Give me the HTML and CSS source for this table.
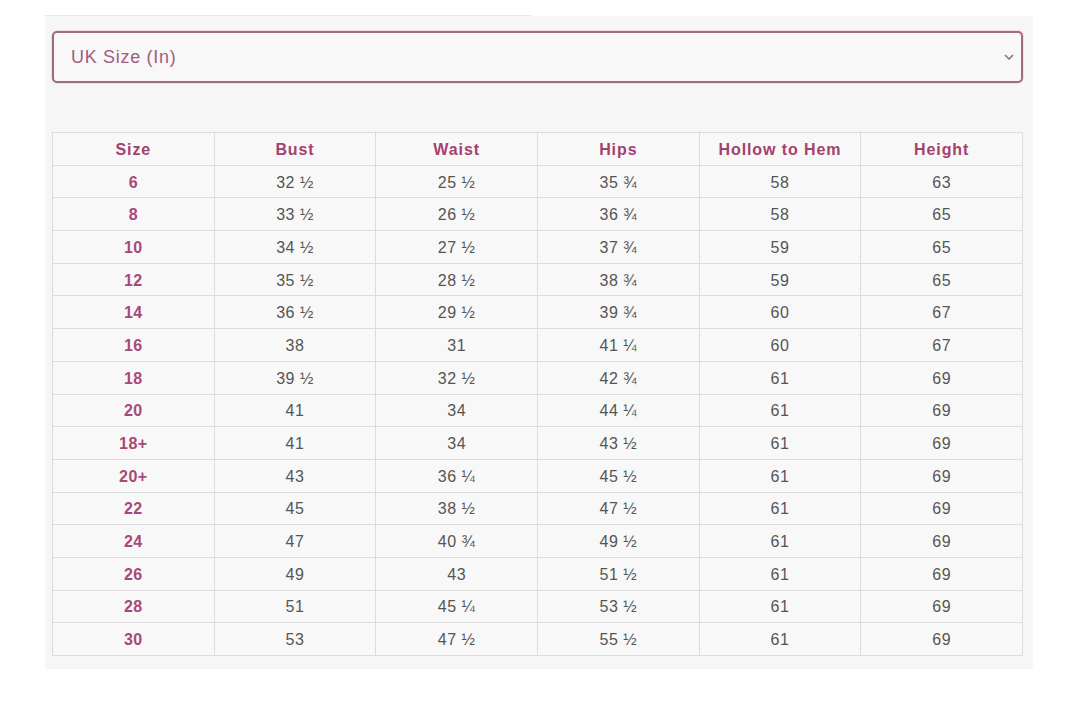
FILE: index.html
```html
<!DOCTYPE html>
<html>
<head>
<meta charset="utf-8">
<link rel="stylesheet" href="styles.css">
</head>
<body>
<div class="panel">
  <div class="topline"></div>
  <div class="select">
    <span class="select-label">UK Size (In)</span>
    <svg class="chev" width="10" height="6" viewBox="0 0 10 6"><path d="M1 1 L5 5 L9 1" fill="none" stroke="#9a6a82" stroke-width="1.6"/></svg>
  </div>
  <table class="sizes">
    <thead>
      <tr><th>Size</th><th>Bust</th><th>Waist</th><th>Hips</th><th>Hollow to Hem</th><th>Height</th></tr>
    </thead>
    <tbody>
      <tr><td class="sz">6</td><td>32 ½</td><td>25 ½</td><td>35 ¾</td><td>58</td><td>63</td></tr>
      <tr><td class="sz">8</td><td>33 ½</td><td>26 ½</td><td>36 ¾</td><td>58</td><td>65</td></tr>
      <tr><td class="sz">10</td><td>34 ½</td><td>27 ½</td><td>37 ¾</td><td>59</td><td>65</td></tr>
      <tr><td class="sz">12</td><td>35 ½</td><td>28 ½</td><td>38 ¾</td><td>59</td><td>65</td></tr>
      <tr><td class="sz">14</td><td>36 ½</td><td>29 ½</td><td>39 ¾</td><td>60</td><td>67</td></tr>
      <tr><td class="sz">16</td><td>38</td><td>31</td><td>41 ¼</td><td>60</td><td>67</td></tr>
      <tr><td class="sz">18</td><td>39 ½</td><td>32 ½</td><td>42 ¾</td><td>61</td><td>69</td></tr>
      <tr><td class="sz">20</td><td>41</td><td>34</td><td>44 ¼</td><td>61</td><td>69</td></tr>
      <tr><td class="sz">18+</td><td>41</td><td>34</td><td>43 ½</td><td>61</td><td>69</td></tr>
      <tr><td class="sz">20+</td><td>43</td><td>36 ¼</td><td>45 ½</td><td>61</td><td>69</td></tr>
      <tr><td class="sz">22</td><td>45</td><td>38 ½</td><td>47 ½</td><td>61</td><td>69</td></tr>
      <tr><td class="sz">24</td><td>47</td><td>40 ¾</td><td>49 ½</td><td>61</td><td>69</td></tr>
      <tr><td class="sz">26</td><td>49</td><td>43</td><td>51 ½</td><td>61</td><td>69</td></tr>
      <tr><td class="sz">28</td><td>51</td><td>45 ¼</td><td>53 ½</td><td>61</td><td>69</td></tr>
      <tr><td class="sz">30</td><td>53</td><td>47 ½</td><td>55 ½</td><td>61</td><td>69</td></tr>
    </tbody>
  </table>
</div>
</body>
</html>
```

FILE: styles.css
```css
html, body {
  margin: 0;
  padding: 0;
  background: #ffffff;
  font-family: "Liberation Sans", Arial, sans-serif;
}

.panel {
  position: relative;
  margin: 16px 0 0 45px;
  width: 988px;
  box-sizing: border-box;
  padding: 15px 10px 13px 7px;
  background: #f6f6f6;
}

.topline {
  position: absolute;
  left: 0;
  top: -1px;
  width: 486px;
  height: 1px;
  background: #e6e6e6;
}

.select {
  display: flex;
  align-items: center;
  justify-content: space-between;
  box-sizing: border-box;
  width: 971px;
  height: 52px;
  padding: 0 7px 0 17px;
  border: 2px solid #9d6b83;
  border-radius: 5px;
  background: #f8f8f8;
  box-shadow: 0 0 0 1px #f6dbe7;
}

.select-label {
  font-size: 18px;
  color: #a25c82;
  letter-spacing: 0.7px;
}

.chev {
  display: block;
}

.sizes {
  margin-top: 49px;
  width: 971px;
  border-collapse: collapse;
  table-layout: fixed;
  background: #f8f8f8;
}

.sizes th,
.sizes td {
  border: 1px solid #dcdcdc;
  height: 29.7px;
  padding: 2px 0 0;
  text-align: center;
  vertical-align: middle;
  font-size: 16px;
  line-height: 18px;
}

.sizes th {
  font-weight: bold;
  color: #a3416f;
  letter-spacing: 0.9px;
}

.sizes td {
  color: #555555;
  letter-spacing: 0.5px;
}

.sizes td.sz {
  color: #a8487a;
  font-weight: bold;
}
```
